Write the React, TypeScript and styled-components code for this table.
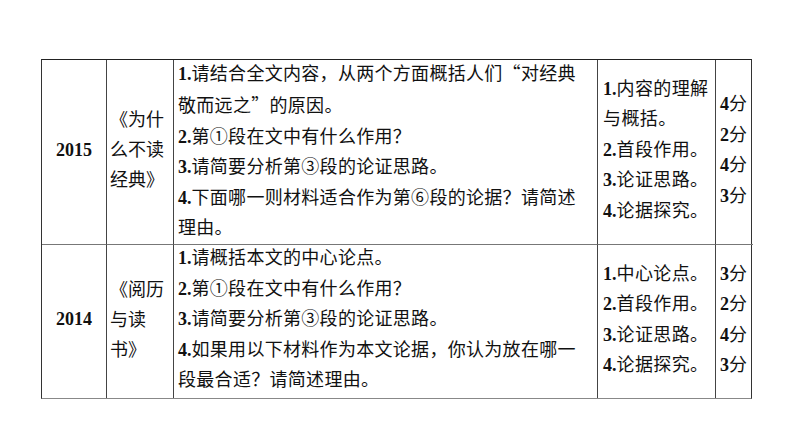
import React from "react";
import styled, { createGlobalStyle } from "styled-components";

const GlobalStyle = createGlobalStyle`
  html, body {
    margin: 0;
    padding: 0;
    background: #ffffff;
  }
  body {
    font-family: "Liberation Serif", "Noto Sans CJK SC", serif;
    color: #111;
  }
`;

const Page = styled.div`
  width: 794px;
  height: 447px;
  box-sizing: border-box;
  padding: 59px 0 0 41px;
`;

const Table = styled.div`
  display: grid;
  grid-template-columns: 65px 67px 424px 118px 37px;
  grid-template-rows: 185px 153px;
  width: 711px;
  border-top: 1.5px solid #222;
  border-left: 1.5px solid #333;
  border-right: 1.5px solid #333;
  border-bottom: 1.5px solid #888;
  box-sizing: border-box;
`;

const Cell = styled.div<{ $last?: boolean; $bottom?: boolean; $align?: "center" | "left"; $pad?: number }>`
  display: flex;
  flex-direction: column;
  justify-content: center;
  align-items: ${(p) => (p.$align === "center" ? "center" : "flex-start")};
  padding: 0 0 4px ${(p) => p.$pad ?? 5}px;
  border-right: ${(p) => (p.$last ? "none" : "1.5px solid #444")};
  border-bottom: ${(p) => (p.$bottom ? "1.5px solid #777" : "none")};
  font-size: 18px;
  line-height: 30.5px;
  box-sizing: border-box;
  overflow: hidden;
`;

const Year = styled.span`
  font-weight: bold;
  font-size: 18px;
`;

const Line = styled.div<{ $spacing?: number }>`
  white-space: nowrap;
  letter-spacing: ${(p) => p.$spacing ?? 0}px;
`;

const Num = styled.b`
  font-family: "Liberation Serif", serif;
  font-weight: bold;
  letter-spacing: 0;
`;

const Quote = styled.span`
  font-family: "Noto Sans CJK SC", sans-serif;
`;

const Title = styled.div`
  width: 60px;
  font-size: 18px;
  line-height: 30px;
`;

type RowData = {
  year: string;
  title: string[];
  questions: string[][];
  points: string[][];
  scores: string[];
};

const rows: RowData[] = [
  {
    year: "2015",
    title: ["《为什", "么不读", "经典》"],
    questions: [
      ["1.", "请结合全文内容，从两个方面概括人们“对经典"],
      ["", "敬而远之”的原因。"],
      ["2.", "第①段在文中有什么作用？"],
      ["3.", "请简要分析第③段的论证思路。"],
      ["4.", "下面哪一则材料适合作为第⑥段的论据？请简述"],
      ["", "理由。"],
    ],
    points: [
      ["1.", "内容的理解"],
      ["", "与概括。"],
      ["2.", "首段作用。"],
      ["3.", "论证思路。"],
      ["4.", "论据探究。"],
    ],
    scores: ["4", "2", "4", "3"],
  },
  {
    year: "2014",
    title: ["《阅历", "与读", "书》"],
    questions: [
      ["1.", "请概括本文的中心论点。"],
      ["2.", "第①段在文中有什么作用？"],
      ["3.", "请简要分析第③段的论证思路。"],
      ["4.", "如果用以下材料作为本文论据，你认为放在哪一"],
      ["", "段最合适？请简述理由。"],
    ],
    points: [
      ["1.", "中心论点。"],
      ["2.", "首段作用。"],
      ["3.", "论证思路。"],
      ["4.", "论据探究。"],
    ],
    scores: ["3", "2", "4", "3"],
  },
];

// render curly quotes in the CJK font so they take a full-width slot
const withQuotes = (text: string) =>
  text.split(/([“”])/).map((part, i) =>
    part === "“" || part === "”" ? <Quote key={i}>{part}</Quote> : part
  );

const App: React.FC = () => {
  return (
    <>
      <GlobalStyle />
      <Page lang="zh-CN">
        <Table>
          {rows.map((r, i) => {
            const bottom = i === 0;
            return (
              <React.Fragment key={r.year}>
                <Cell $align="center" $pad={0} $bottom={bottom}>
                  <Year>{r.year}</Year>
                </Cell>
                <Cell $pad={3} $bottom={bottom}>
                  <Title>
                    {r.title.map((t) => (
                      <Line key={t}>{t}</Line>
                    ))}
                  </Title>
                </Cell>
                <Cell $pad={4} $bottom={bottom}>
                  {r.questions.map(([n, t], k) => (
                    <Line key={k} $spacing={0.3}>
                      {n && <Num>{n}</Num>}
                      {withQuotes(t)}
                    </Line>
                  ))}
                </Cell>
                <Cell $pad={5} $bottom={bottom}>
                  {r.points.map(([n, t], k) => (
                    <Line key={k} $spacing={0.4}>
                      {n && <Num>{n}</Num>}
                      {t}
                    </Line>
                  ))}
                </Cell>
                <Cell $pad={4} $last $bottom={bottom}>
                  {r.scores.map((s, k) => (
                    <Line key={k}>
                      <Num>{s}</Num>分
                    </Line>
                  ))}
                </Cell>
              </React.Fragment>
            );
          })}
        </Table>
      </Page>
    </>
  );
};

export default App;
